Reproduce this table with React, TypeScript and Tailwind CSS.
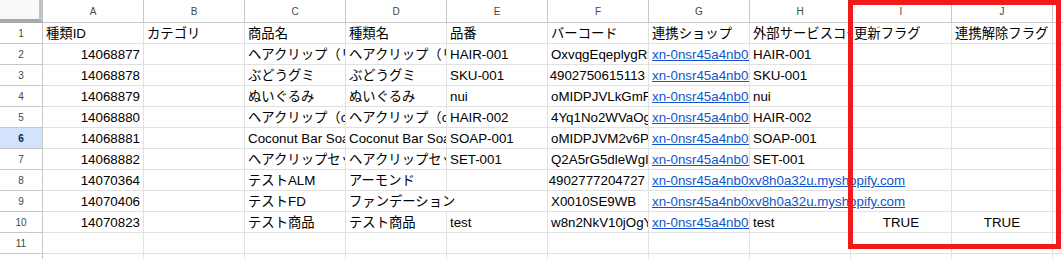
import React from "react";

type Cell = { t?: string; a?: "l" | "r" | "c"; link?: boolean; span?: number };

const LINK = "xn-0nsr45a4nb0xv8h0a32u.myshopify.com";
const L = (span = 1): Cell => ({ t: LINK, link: true, span });

const cols = ["A", "B", "C", "D", "E", "F", "G", "H", "I", "J", "K"];

const rows: Cell[][] = [
  [
    { t: "種類ID" },
    { t: "カテゴリ" },
    { t: "商品名" },
    { t: "種類名" },
    { t: "品番" },
    { t: "バーコード" },
    { t: "連携ショップ" },
    { t: "外部サービスコード" },
    { t: "更新フラグ" },
    { t: "連携解除フラグ" },
    {},
  ],
  [
    { t: "14068877", a: "r" },
    {},
    { t: "ヘアクリップ（リボン）" },
    { t: "ヘアクリップ（リボン）" },
    { t: "HAIR-001" },
    { t: "OxvqgEqeplygRkT3a" },
    L(),
    { t: "HAIR-001" },
    {},
    {},
    {},
  ],
  [
    { t: "14068878", a: "r" },
    {},
    { t: "ぶどうグミ" },
    { t: "ぶどうグミ" },
    { t: "SKU-001" },
    { t: "4902750615113", a: "r" },
    L(),
    { t: "SKU-001" },
    {},
    {},
    {},
  ],
  [
    { t: "14068879", a: "r" },
    {},
    { t: "ぬいぐるみ" },
    { t: "ぬいぐるみ" },
    { t: "nui" },
    { t: "oMIDPJVLkGmFq2Zx" },
    L(),
    { t: "nui" },
    {},
    {},
    {},
  ],
  [
    { t: "14068880", a: "r" },
    {},
    { t: "ヘアクリップ（clear）" },
    { t: "ヘアクリップ（clear）" },
    { t: "HAIR-002" },
    { t: "4Yq1No2WVaOgT8kd" },
    L(),
    { t: "HAIR-002" },
    {},
    {},
    {},
  ],
  [
    { t: "14068881", a: "r" },
    {},
    { t: "Coconut Bar Soap" },
    { t: "Coconut Bar Soap" },
    { t: "SOAP-001" },
    { t: "oMIDPJVM2v6PxQa1" },
    L(),
    { t: "SOAP-001" },
    {},
    {},
    {},
  ],
  [
    { t: "14068882", a: "r" },
    {},
    { t: "ヘアクリップセット" },
    { t: "ヘアクリップセット" },
    { t: "SET-001" },
    { t: "Q2A5rG5dleWgIh7s" },
    L(),
    { t: "SET-001" },
    {},
    {},
    {},
  ],
  [
    { t: "14070364", a: "r" },
    {},
    { t: "テストALM" },
    { t: "アーモンド" },
    {},
    { t: "4902777204727", a: "r" },
    L(3),
    {},
    {},
  ],
  [
    { t: "14070406", a: "r" },
    {},
    { t: "テストFD" },
    { t: "ファンデーション", span: 2 },
    { t: "X0010SE9WB" },
    L(3),
    {},
    {},
  ],
  [
    { t: "14070823", a: "r" },
    {},
    { t: "テスト商品" },
    { t: "テスト商品" },
    { t: "test" },
    { t: "w8n2NkV10jOgYb4p" },
    L(),
    { t: "test" },
    { t: "TRUE", a: "c" },
    { t: "TRUE", a: "c" },
    {},
  ],
  Array.from({ length: 11 }, () => ({})),
  Array.from({ length: 11 }, () => ({})),
];

const spanW: Record<number, string> = {
  1: "w-[101px]",
  2: "w-[202px]",
  3: "w-[303px]",
};

function DataCell({ c }: { c: Cell }) {
  const span = c.span ?? 1;
  const align =
    c.a === "r" ? "justify-end" : c.a === "c" ? "justify-center" : "justify-start";
  return (
    <div
      className={`${spanW[span]} h-[21px] shrink-0 box-border border-r border-b border-[#e1e1e1] flex items-end ${align} overflow-hidden px-[3px] pb-[1px]`}
    >
      {c.t ? (
        <span
          className={`whitespace-nowrap leading-[16px] text-[13.33px] ${
            c.link ? "text-[#1155cc] underline" : "text-black"
          }`}
        >
          {c.t}
        </span>
      ) : null}
    </div>
  );
}

export default function App() {
  return (
    <div
      className="relative w-[1063px] h-[259px] overflow-hidden bg-white"
      style={{ fontFamily: '"Liberation Sans", Arial, "Noto Sans CJK JP", sans-serif' }}
    >
      <div className="flex w-max">
        <div className="w-[43px] h-[23px] shrink-0 box-border bg-[#f8f9fa] border-r-[4px] border-b-[4px] border-r-[#c2c2c2] border-b-[#a9a9a9]" />
        {cols.map((l) => (
          <div
            key={l}
            className="w-[101px] h-[23px] shrink-0 box-border border-r border-b border-[#c7c7c7] flex items-center justify-center text-[10px] text-[#444746]"
          >
            {l}
          </div>
        ))}
      </div>
      {rows.map((r, i) => {
        const sel = i === 5;
        return (
          <div key={i} className="flex w-max">
            <div
              className={`w-[43px] h-[21px] shrink-0 box-border border-r border-b border-[#c7c7c7] flex items-center justify-center text-[10px] ${
                sel ? "bg-[#d3e3fd] text-[#041e49] font-bold" : "bg-white text-[#444746]"
              }`}
            >
              {i + 1}
            </div>
            {r.map((c, j) => (
              <DataCell key={j} c={c} />
            ))}
          </div>
        );
      })}
      <div className="absolute left-[848px] top-0 w-[213px] h-[249px] box-border border-[5px] border-[#f21b1b] pointer-events-none" />
    </div>
  );
}
